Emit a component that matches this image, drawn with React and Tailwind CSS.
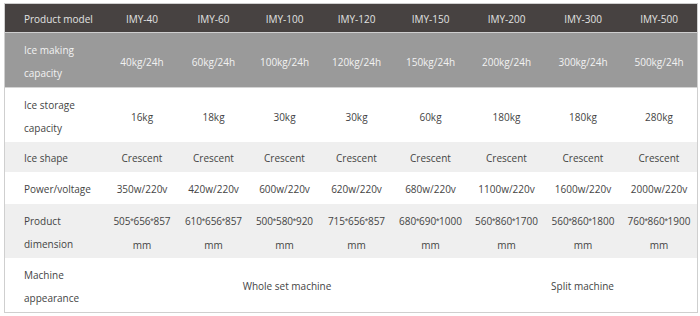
import React from "react";

const cols = ["IMY-40", "IMY-60", "IMY-100", "IMY-120", "IMY-150", "IMY-200", "IMY-300", "IMY-500"];

const rows = [
  {
    label: ["Ice making", "capacity"],
    vals: ["40kg/24h", "60kg/24h", "100kg/24h", "120kg/24h", "150kg/24h", "200kg/24h", "300kg/24h", "500kg/24h"],
    bg: "bg-[#9a9a9a] text-[#f2f2f2] border-b border-[#d4d4d4]",
    h: "h-[55px]",
    pt: "pt-[4px]",
  },
  {
    label: ["Ice storage", "capacity"],
    vals: ["16kg", "18kg", "30kg", "30kg", "60kg", "180kg", "180kg", "280kg"],
    bg: "bg-white text-[#444]",
    h: "h-[54px]",
    pt: "pt-[4px]",
  },
  {
    label: ["Ice shape"],
    vals: Array(8).fill("Crescent"),
    bg: "bg-[#efefef] text-[#444]",
    h: "h-[30px]",
    pt: "pt-[2px]",
  },
  {
    label: ["Power/voltage"],
    vals: ["350w/220v", "420w/220v", "600w/220v", "620w/220v", "680w/220v", "1100w/220v", "1600w/220v", "2000w/220v"],
    bg: "bg-white text-[#444]",
    h: "h-[32px]",
    pt: "pt-[2px]",
  },
  {
    label: ["Product", "dimension"],
    vals: ["505*656*857", "610*656*857", "500*580*920", "715*656*857", "680*690*1000", "560*860*1700", "560*860*1800", "760*860*1900"].map((v) => [v, "mm"]),
    bg: "bg-[#efefef] text-[#444]",
    h: "h-[54px]",
    pt: "pt-[4px]",
  },
];

function Txt({ t }) {
  const parts = t.split("*");
  return (
    <div className="whitespace-nowrap">
      {parts.map((p, i) => (
        <React.Fragment key={i}>
          {i > 0 && <span className="text-[7px] relative top-[-2px] mx-[-0.5px]">*</span>}
          {p}
        </React.Fragment>
      ))}
    </div>
  );
}

function Lines({ items }) {
  const arr = Array.isArray(items) ? items : [items];
  return (
    <>
      {arr.map((t, i) => (
        <Txt key={i} t={t} />
      ))}
    </>
  );
}

const grid = "grid grid-cols-[101px_72px_71px_71px_73px_75px_77px_76px_76px]";

export default function App() {
  return (
    <div
      className="w-[700px] h-[316px] bg-white overflow-hidden"
      style={{ fontFamily: '"Open Sans", "Liberation Sans", sans-serif' }}
    >
      <div className="ml-[4px] mt-[3px] w-[694px] border border-[#cfcfcf] text-[10px] leading-[23px]">
        <div className={`${grid} h-[29px] bg-[#474241] text-[#e2e2e2] border-b border-[#cfcfcf]`}>
          <div className="flex items-center pl-[19px] pt-[2px] whitespace-nowrap">Product model</div>
          {cols.map((c) => (
            <div key={c} className="flex items-center justify-center pt-[2px]">{c}</div>
          ))}
        </div>
        {rows.map((r, i) => (
          <div key={i} className={`${grid} ${r.h} ${r.bg}`}>
            <div className={`flex flex-col justify-center pl-[19px] ${r.pt}`}>
              <Lines items={r.label} />
            </div>
            {r.vals.map((v, j) => (
              <div key={j} className={`flex flex-col items-center justify-center ${r.pt}`}>
                <Lines items={v} />
              </div>
            ))}
          </div>
        ))}
        <div className={`${grid} h-[54px] bg-white text-[#444]`}>
          <div className="flex flex-col justify-center pl-[19px] pt-[4px]">
            <Lines items={["Machine", "appearance"]} />
          </div>
          <div className="col-span-5 flex items-center justify-center pt-[2px]">Whole set machine</div>
          <div className="col-span-3 flex items-center justify-center pt-[2px]">Split machine</div>
        </div>
      </div>
    </div>
  );
}
